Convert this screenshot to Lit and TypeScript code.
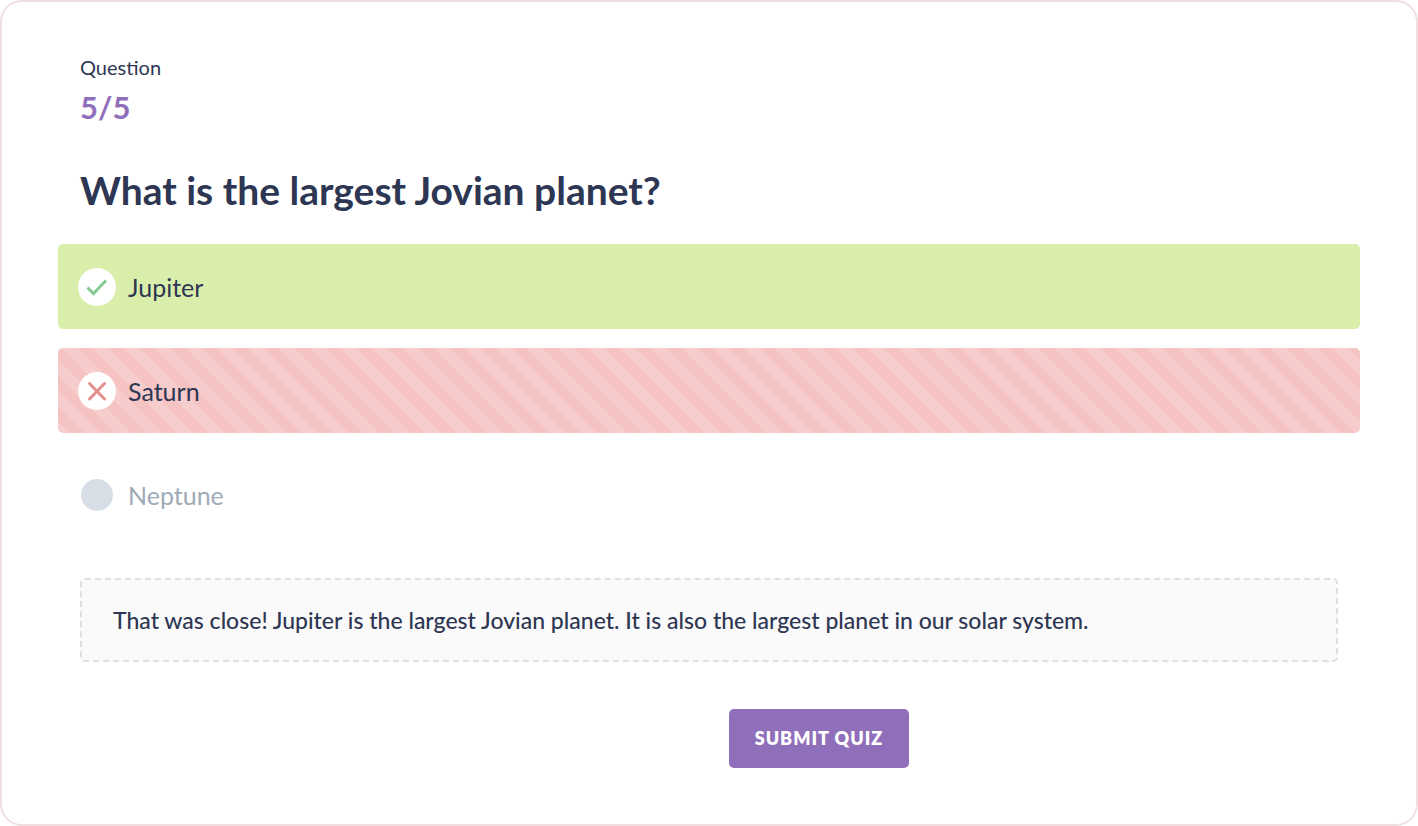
import { LitElement, html, css, svg, nothing } from "lit";
import { customElement, state } from "lit/decorators.js";
import { classMap } from "lit/directives/class-map.js";

type Mark = "correct" | "wrong" | "idle";

interface Answer {
  label: string;
  mark: Mark;
}

@customElement("app-root")
export class AppRoot extends LitElement {
  static styles = css`
    :host {
      display: block;
      font-family: Lato, "Liberation Sans", sans-serif;
      color: #2d3652;
      background: #fff;
    }
    * {
      box-sizing: border-box;
    }
    .card {
      display: flex;
      flex-direction: column;
      min-height: 100vh;
      padding: 53px 56px 56px;
      border: 2px solid #f0dfe1;
      border-radius: 22px;
      background: #fff;
    }
    .head {
      padding: 0 22px;
    }
    .caption {
      margin: 0;
      font-size: 20px;
      line-height: 24px;
    }
    .progress {
      margin: 8px 0 0;
      color: #906fba;
      font-size: 31px;
      font-weight: 700;
      line-height: 40px;
    }
    .title {
      margin: 39px 0 0;
      font-size: 39px;
      font-weight: 700;
      line-height: 48px;
    }
    .answers {
      display: flex;
      flex-direction: column;
      gap: 19px;
      margin: 30px 0 0;
      padding: 0;
      border: 0;
    }
    .answer {
      display: flex;
      align-items: center;
      gap: 12px;
      min-height: 85px;
      padding: 0 20px;
      border-radius: 5px;
      font-size: 25px;
      line-height: 30px;
    }
    .answer.correct {
      background: #daeeab;
    }
    .answer.wrong {
      background: #f7cccc
        linear-gradient(
          45deg,
          #f6c3c3 25%,
          transparent 25% 50%,
          #f6c3c3 50% 75%,
          transparent 75%
        ) -12px 0 / 31px 31px;
    }
    .answer.idle {
      color: #9dabb7;
    }
    .badge {
      display: grid;
      place-items: center;
      flex: none;
      width: 38px;
      height: 38px;
    }
    .badge > * {
      grid-area: 1 / 1;
    }
    .radio {
      appearance: none;
      width: 38px;
      height: 38px;
      margin: 0;
      border-radius: 50%;
      background: #fff;
    }
    .idle .radio {
      width: 32px;
      height: 32px;
      background: #d8dee6;
    }
    .icon {
      width: 38px;
      height: 38px;
      fill: none;
      stroke-width: 3;
      pointer-events: none;
    }
    .correct .icon {
      stroke: #86ca92;
    }
    .wrong .icon {
      stroke: #e38f8b;
      stroke-linecap: round;
    }
    .feedback {
      margin: 41px 22px 0;
      padding: 26px 31px;
      border: 2px dashed #dcdfe4;
      border-radius: 5px;
      background: #fafafa;
      font-size: 23px;
      font-weight: 500;
      line-height: 28px;
    }
    .submit {
      align-self: center;
      margin: 47px 0 0 220px;
      padding: 0 26px 2px;
      min-height: 59px;
      border: 0;
      border-radius: 5px;
      background: #906fba;
      color: #fff;
      font-family: inherit;
      font-size: 18px;
      font-weight: 800;
      letter-spacing: 1px;
      line-height: 24px;
      text-transform: uppercase;
      cursor: pointer;
    }
  `;

  @state() private answers: Answer[] = [
    { label: "Jupiter", mark: "correct" },
    { label: "Saturn", mark: "wrong" },
    { label: "Neptune", mark: "idle" },
  ];

  private icon(mark: Mark) {
    if (mark === "idle") return nothing;
    const path = mark === "correct" ? "M9.5 19.5 L15.5 25.5 L28 12.5" : "M11.5 11.5 L26.5 27 M26.5 11.5 L11.5 27";
    return html`<svg class="icon" viewBox="0 0 38 38" aria-hidden="true">${svg`<path d=${path}></path>`}</svg>`;
  }

  render() {
    return html`
      <main class="card">
        <header class="head">
          <p class="caption">Question</p>
          <p class="progress">5/5</p>
          <h1 class="title" id="question">What is the largest Jovian planet?</h1>
        </header>
        <fieldset class="answers" aria-labelledby="question">
          ${this.answers.map(
            (a) => html`
              <label class=${classMap({ answer: true, [a.mark]: true })}>
                <span class="badge">
                  <input class="radio" type="radio" name="answer" .checked=${a.mark === "wrong"} />
                  ${this.icon(a.mark)}
                </span>
                <span>${a.label}</span>
              </label>
            `,
          )}
        </fieldset>
        <p class="feedback">
          That was close! Jupiter is the largest Jovian planet. It is also the largest planet in our solar system.
        </p>
        <button class="submit" type="button">Submit quiz</button>
      </main>
    `;
  }
}
